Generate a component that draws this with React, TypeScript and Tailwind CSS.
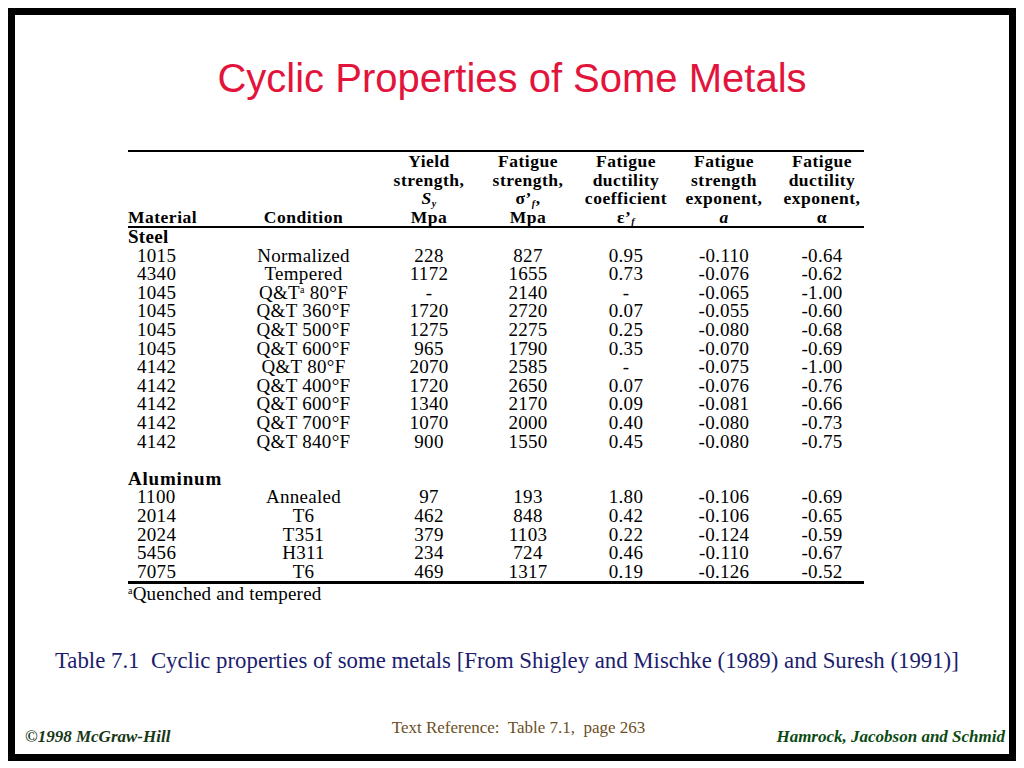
import React from 'react';

type Row = {
  material: string;
  condition: React.ReactNode;
  sy: string;
  sf: string;
  ef: string;
  b: string;
  c: string;
};

const steel: Row[] = [
  { material: '1015', condition: 'Normalized', sy: '228', sf: '827', ef: '0.95', b: '-0.110', c: '-0.64' },
  { material: '4340', condition: 'Tempered', sy: '1172', sf: '1655', ef: '0.73', b: '-0.076', c: '-0.62' },
  {
    material: '1045',
    condition: (
      <>
        Q&amp;T<sup className="text-[10px] -top-[0.55em]">a</sup> 80°F
      </>
    ),
    sy: '-',
    sf: '2140',
    ef: '-',
    b: '-0.065',
    c: '-1.00',
  },
  { material: '1045', condition: 'Q&T 360°F', sy: '1720', sf: '2720', ef: '0.07', b: '-0.055', c: '-0.60' },
  { material: '1045', condition: 'Q&T 500°F', sy: '1275', sf: '2275', ef: '0.25', b: '-0.080', c: '-0.68' },
  { material: '1045', condition: 'Q&T 600°F', sy: '965', sf: '1790', ef: '0.35', b: '-0.070', c: '-0.69' },
  { material: '4142', condition: 'Q&T 80°F', sy: '2070', sf: '2585', ef: '-', b: '-0.075', c: '-1.00' },
  { material: '4142', condition: 'Q&T 400°F', sy: '1720', sf: '2650', ef: '0.07', b: '-0.076', c: '-0.76' },
  { material: '4142', condition: 'Q&T 600°F', sy: '1340', sf: '2170', ef: '0.09', b: '-0.081', c: '-0.66' },
  { material: '4142', condition: 'Q&T 700°F', sy: '1070', sf: '2000', ef: '0.40', b: '-0.080', c: '-0.73' },
  { material: '4142', condition: 'Q&T 840°F', sy: '900', sf: '1550', ef: '0.45', b: '-0.080', c: '-0.75' },
];

const aluminum: Row[] = [
  { material: '1100', condition: 'Annealed', sy: '97', sf: '193', ef: '1.80', b: '-0.106', c: '-0.69' },
  { material: '2014', condition: 'T6', sy: '462', sf: '848', ef: '0.42', b: '-0.106', c: '-0.65' },
  { material: '2024', condition: 'T351', sy: '379', sf: '1103', ef: '0.22', b: '-0.124', c: '-0.59' },
  { material: '5456', condition: 'H311', sy: '234', sf: '724', ef: '0.46', b: '-0.110', c: '-0.67' },
  { material: '7075', condition: 'T6', sy: '469', sf: '1317', ef: '0.19', b: '-0.126', c: '-0.52' },
];

// column widths measured off the slide (table is 736px wide)
const cols = 'grid grid-cols-[112px_127px_112px_98px_98px_98px_98px]';

function DataRow({ row }: { row: Row }) {
  return (
    <div className={`${cols} h-[18.6px] leading-[18.6px]`}>
      <div className="pl-[9px]">{row.material}</div>
      <div className="text-center">{row.condition}</div>
      <div className="text-center pl-[12px]">{row.sy}</div>
      <div className="text-center">{row.sf}</div>
      <div className="text-center">{row.ef}</div>
      <div className="text-center">{row.b}</div>
      <div className="text-center">{row.c}</div>
    </div>
  );
}

function HeadCell({ lines, className = '' }: { lines: React.ReactNode[]; className?: string }) {
  return (
    <div className={`flex flex-col justify-end text-center ${className}`}>
      {lines.map((l, i) => (
        <div key={i} className="h-[18.5px] leading-[18.5px]">
          {l}
        </div>
      ))}
    </div>
  );
}

export default function App() {
  return (
    <div className="w-[1024px] h-[768px] bg-white pt-[8px] pl-[8px]">
      <div className="w-[1008px] h-[753px] border-[7px] border-black flex flex-col">
        {/* Title */}
        <h1 className="mt-[39px] text-center text-[40px] leading-[48px] text-[#e3143c] font-['Liberation_Sans',Arial,sans-serif]">
          Cyclic Properties of Some Metals
        </h1>

        {/* Table */}
        <div className="ml-[113px] mt-[48px] w-[736px] font-['Liberation_Serif','Times_New_Roman',serif] text-black">
          <div className="border-t-2 border-b-2 border-black">
            <div className={`${cols} h-[74px] text-[17.5px] font-bold tracking-[0.5px]`}>
              <div className="flex flex-col justify-end">
                <div className="h-[18.5px] leading-[18.5px]">Material</div>
              </div>
              <HeadCell lines={['Condition']} />
              <HeadCell
                className="pl-[12px]"
                lines={[
                  'Yield',
                  'strength,',
                  <>
                    <i>S</i>
                    <sub className="text-[10px] italic">y</sub>
                  </>,
                  'Mpa',
                ]}
              />
              <HeadCell
                lines={[
                  'Fatigue',
                  'strength,',
                  <>
                    σ’<sub className="text-[10px] italic">f</sub>,
                  </>,
                  'Mpa',
                ]}
              />
              <HeadCell
                lines={[
                  'Fatigue',
                  'ductility',
                  'coefficient',
                  <>
                    ε’<sub className="text-[10px] italic">f</sub>
                  </>,
                ]}
              />
              <HeadCell lines={['Fatigue', 'strength', 'exponent,', <i>a</i>]} />
              <HeadCell lines={['Fatigue', 'ductility', 'exponent,', 'α']} />
            </div>
          </div>

          <div className="border-b-[3px] border-black text-[19px] tracking-[0.3px]">
            <div className="h-[18.6px] leading-[18.6px] font-bold">Steel</div>
            {steel.map((r, i) => (
              <DataRow key={i} row={r} />
            ))}
            <div className="h-[18.6px]" />
            <div className="h-[18.6px] leading-[18.6px] font-bold tracking-[0.8px]">Aluminum</div>
            {aluminum.map((r, i) => (
              <DataRow key={i} row={r} />
            ))}
          </div>
          <div className="h-[20px] leading-[20px] text-[19px] tracking-[0.2px]">
            <sup className="text-[10px] -top-[0.6em]">a</sup>Quenched and tempered
          </div>
        </div>

        {/* Caption */}
        <p className="mt-[43px] pl-[40px] text-[22.8px] leading-[28px] text-[#1c1c6e] font-['Liberation_Serif','Times_New_Roman',serif] whitespace-pre">
          Table 7.1  Cyclic properties of some metals [From Shigley and Mischke (1989) and Suresh (1991)]
        </p>

        {/* Footer */}
        <div className="mt-auto h-[36px] grid grid-cols-[1fr_auto_1fr] font-['Liberation_Serif','Times_New_Roman',serif]">
          <div className="self-end pb-[7px] pl-[10px] text-[17px] leading-[20px] font-bold italic text-[#183818]">
            ©1998 McGraw-Hill
          </div>
          <div className="self-start ml-[13px] text-[17px] leading-[20px] text-[#6b4f1f] whitespace-pre">
            Text Reference:  Table 7.1,  page 263
          </div>
          <div className="self-end pb-[7px] pr-[4px] text-right text-[17px] leading-[20px] font-bold italic text-[#0b4a12]">
            Hamrock, Jacobson and Schmid
          </div>
        </div>
      </div>
    </div>
  );
}
